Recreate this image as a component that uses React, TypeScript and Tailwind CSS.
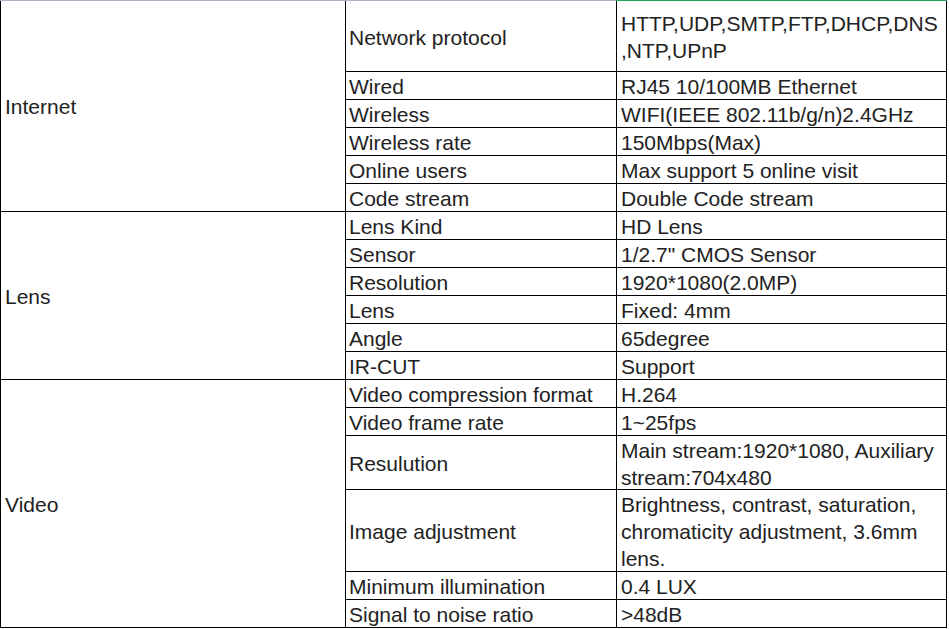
const sections = [
  {
    name: "Internet",
    rows: [
      { label: "Network protocol", value: ["HTTP,UDP,SMTP,FTP,DHCP,DNS", ",NTP,UPnP"], h: "h-[70px]" },
      { label: "Wired", value: ["RJ45 10/100MB Ethernet"] },
      { label: "Wireless", value: ["WIFI(IEEE 802.11b/g/n)2.4GHz"] },
      { label: "Wireless rate", value: ["150Mbps(Max)"] },
      { label: "Online users", value: ["Max support 5 online visit"] },
      { label: "Code stream", value: ["Double Code stream"] },
    ],
  },
  {
    name: "Lens",
    rows: [
      { label: "Lens Kind", value: ["HD Lens"] },
      { label: "Sensor", value: ['1/2.7" CMOS Sensor'] },
      { label: "Resolution", value: ["1920*1080(2.0MP)"] },
      { label: "Lens", value: ["Fixed: 4mm"] },
      { label: "Angle", value: ["65degree"] },
      { label: "IR-CUT", value: ["Support"] },
    ],
  },
  {
    name: "Video",
    rows: [
      { label: "Video compression format", value: ["H.264"] },
      { label: "Video frame rate", value: ["1~25fps"] },
      { label: "Resulution", value: ["Main stream:1920*1080, Auxiliary", "stream:704x480"], h: "h-[53px]" },
      {
        label: "Image adjustment",
        value: ["Brightness, contrast, saturation,", "chromaticity adjustment, 3.6mm", "lens."],
        h: "h-[81px]",
      },
      { label: "Minimum illumination", value: ["0.4 LUX"] },
      { label: "Signal to noise ratio", value: [">48dB"] },
    ],
  },
];

const App = () => {
  return (
    <div className="w-[949px] h-[629px] bg-white text-[#222] text-[21px] font-['Liberation_Sans',Arial,sans-serif]">
      <div className="flex h-px w-[947px]">
        <div className="w-[616px] bg-[#a9b1c4]" />
        <div className="flex-1 bg-[#22a45d]" />
      </div>
      <div className="w-[947px] flex flex-col gap-px bg-black p-px pt-0">
        {sections.map((s) => (
          <div key={s.name} className="flex gap-px">
            <div className="w-[344px] bg-white flex items-center pl-[4px] pt-[2px]">{s.name}</div>
            <div className="flex-1 flex flex-col gap-px">
              {s.rows.map((r) => (
                <div key={r.label} className={`flex gap-px ${r.h ?? "h-[27px]"}`}>
                  <div className="w-[270px] bg-white flex items-center pl-[3px] pt-[2px] leading-[27px]">{r.label}</div>
                  <div className="flex-1 bg-white flex flex-col justify-center pl-[4px] pt-[2px] leading-[27px] whitespace-nowrap">
                    {r.value.map((v) => (
                      <span key={v}>{v}</span>
                    ))}
                  </div>
                </div>
              ))}
            </div>
          </div>
        ))}
      </div>
    </div>
  );
};

export default App;
